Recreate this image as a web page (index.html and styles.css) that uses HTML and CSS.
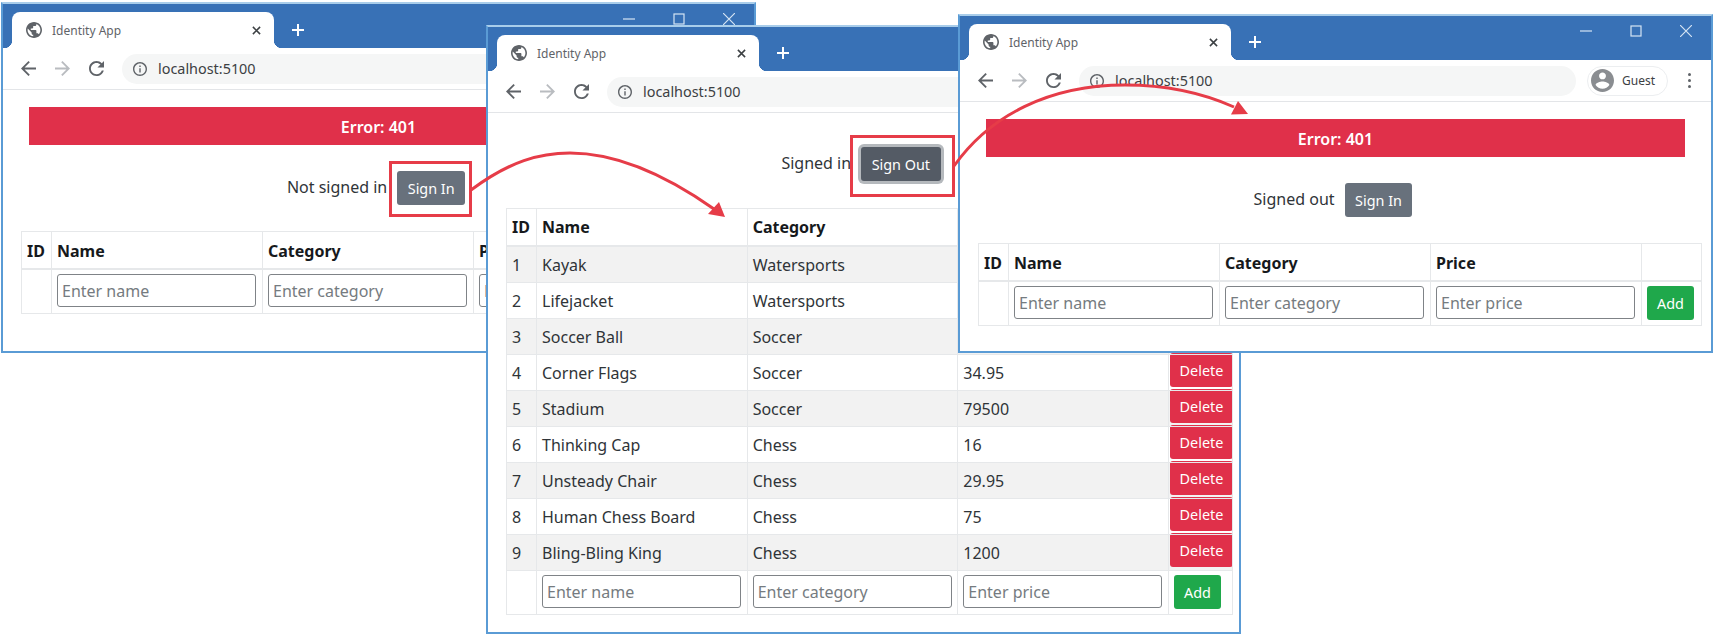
FILE: index.html
```html
<!DOCTYPE html>
<html lang="en">
<head>
    <meta charset="UTF-8">
    <title>Identity App</title>
    <link rel="stylesheet" href="styles.css">
</head>
<body>
    <svg class="defs" aria-hidden="true">
        <symbol id="i-globe" viewBox="2 2 20 20"><path d="M12 2C6.48 2 2 6.48 2 12s4.48 10 10 10 10-4.48 10-10S17.52 2 12 2zm-1 17.93c-3.95-.49-7-3.85-7-7.93 0-.62.08-1.21.21-1.79L9 15v1c0 1.1.9 2 2 2v1.93zm6.9-2.54c-.26-.81-1-1.39-1.9-1.39h-1v-3c0-.55-.45-1-1-1H8v-2h2c.55 0 1-.45 1-1V7h2c1.1 0 2-.9 2-2v-.41c2.93 1.19 5 4.06 5 7.41 0 2.08-.8 3.97-2.1 5.39z"/></symbol>
        <symbol id="i-back" viewBox="4 4 16 16"><path d="M20 11H7.83l5.59-5.59L12 4l-8 8 8 8 1.41-1.41L7.83 13H20v-2z"/></symbol>
        <symbol id="i-forward" viewBox="4 4 16 16"><path d="M12 4l-1.41 1.41L16.17 11H4v2h12.17l-5.58 5.59L12 20l8-8z"/></symbol>
        <symbol id="i-reload" viewBox="4 4 16 16"><path d="M17.65 6.35C16.2 4.9 14.21 4 12 4c-4.42 0-7.99 3.58-7.99 8s3.57 8 7.99 8c3.73 0 6.84-2.55 7.73-6h-2.08c-.82 2.33-3.04 4-5.65 4-3.31 0-6-2.69-6-6s2.69-6 6-6c1.66 0 3.14.69 4.22 1.78L13 11h7V4l-2.35 2.35z"/></symbol>
        <symbol id="i-info" viewBox="2 2 20 20"><path d="M11 7h2v2h-2zm0 4h2v6h-2zm1-9C6.48 2 2 6.48 2 12s4.48 10 10 10 10-4.48 10-10S17.52 2 12 2zm0 18c-4.41 0-8-3.59-8-8s3.59-8 8-8 8 3.59 8 8-3.59 8-8 8z"/></symbol>
        <symbol id="i-user" viewBox="2 2 20 20"><path d="M12 2C6.48 2 2 6.48 2 12s4.48 10 10 10 10-4.48 10-10S17.52 2 12 2zm0 3c1.66 0 3 1.34 3 3s-1.34 3-3 3-3-1.34-3-3 1.34-3 3-3zm0 14.2c-2.5 0-4.71-1.28-6-3.22.03-1.99 4-3.08 6-3.08 1.99 0 5.97 1.09 6 3.08-1.29 1.94-3.5 3.22-6 3.22z"/></symbol>
        <symbol id="i-close" viewBox="0 0 10 10"><path d="M1 1l8 8M9 1l-8 8" fill="none" stroke="currentColor" stroke-width="1.7"/></symbol>
        <symbol id="i-plus" viewBox="0 0 12 12"><path d="M6 0v12M0 6h12" fill="none" stroke="currentColor" stroke-width="2"/></symbol>
        <symbol id="i-min" viewBox="0 0 12 12"><path d="M0 6h12" fill="none" stroke="currentColor" stroke-width="1.2"/></symbol>
        <symbol id="i-max" viewBox="0 0 12 12"><rect x="1" y="1" width="10" height="10" fill="none" stroke="currentColor" stroke-width="1.2"/></symbol>
        <symbol id="i-x" viewBox="0 0 12 12"><path d="M0 0l12 12M12 0L0 12" fill="none" stroke="currentColor" stroke-width="1.2"/></symbol>
    </svg>

    <!-- janela 1: nao autenticado -->
    <section class="window win-first">
        <header class="tabstrip">
            <div class="tab">
                <svg class="favicon"><use href="#i-globe"/></svg>
                <span class="tab-title">Identity App</span>
                <svg class="tab-close"><use href="#i-close"/></svg>
            </div>
            <svg class="new-tab"><use href="#i-plus"/></svg>
            <div class="controls">
                <svg class="ctl"><use href="#i-min"/></svg>
                <svg class="ctl"><use href="#i-max"/></svg>
                <svg class="ctl"><use href="#i-x"/></svg>
            </div>
        </header>
        <nav class="toolbar">
            <svg class="nav-icon"><use href="#i-back"/></svg>
            <svg class="nav-icon off"><use href="#i-forward"/></svg>
            <svg class="nav-icon"><use href="#i-reload"/></svg>
            <div class="omnibox">
                <svg class="info"><use href="#i-info"/></svg>
                <span>localhost:5100</span>
            </div>
            <div class="profile">
                <svg class="avatar"><use href="#i-user"/></svg>
                <span>Guest</span>
            </div>
            <div class="kebab"><i></i><i></i><i></i></div>
        </nav>
        <main class="page">
            <div class="alert">Error: 401</div>
            <div class="auth">
                <span>Not signed in</span>
                <button class="btn btn-gray">Sign In</button>
            </div>
            <table class="grid grid-short">
                <colgroup><col class="c-id"><col class="c-wide"><col class="c-wide"><col class="c-wide"><col class="c-act"></colgroup>
                <thead>
                    <tr><th>ID</th><th>Name</th><th>Category</th><th>Price</th><th></th></tr>
                </thead>
                <tbody>
                    <tr class="form-row">
                        <td></td>
                        <td><input placeholder="Enter name"></td>
                        <td><input placeholder="Enter category"></td>
                        <td><input placeholder="Enter price"></td>
                        <td><button class="btn btn-green">Add</button></td>
                    </tr>
                </tbody>
            </table>
        </main>
    </section>

    <!-- janela 2: autenticado, com os produtos -->
    <section class="window win-second">
        <header class="tabstrip">
            <div class="tab">
                <svg class="favicon"><use href="#i-globe"/></svg>
                <span class="tab-title">Identity App</span>
                <svg class="tab-close"><use href="#i-close"/></svg>
            </div>
            <svg class="new-tab"><use href="#i-plus"/></svg>
            <div class="controls">
                <svg class="ctl"><use href="#i-min"/></svg>
                <svg class="ctl"><use href="#i-max"/></svg>
                <svg class="ctl"><use href="#i-x"/></svg>
            </div>
        </header>
        <nav class="toolbar">
            <svg class="nav-icon"><use href="#i-back"/></svg>
            <svg class="nav-icon off"><use href="#i-forward"/></svg>
            <svg class="nav-icon"><use href="#i-reload"/></svg>
            <div class="omnibox">
                <svg class="info"><use href="#i-info"/></svg>
                <span>localhost:5100</span>
            </div>
            <div class="profile">
                <svg class="avatar"><use href="#i-user"/></svg>
                <span>Guest</span>
            </div>
            <div class="kebab"><i></i><i></i><i></i></div>
        </nav>
        <main class="page">
            <div class="auth">
                <span>Signed in</span>
                <button class="btn btn-dark">Sign Out</button>
            </div>
            <table class="grid grid-long">
                <colgroup><col class="c-id"><col class="c-wide"><col class="c-wide"><col class="c-wide"><col class="c-act"></colgroup>
                <thead>
                    <tr><th>ID</th><th>Name</th><th>Category</th><th>Price</th><th></th></tr>
                </thead>
                <tbody>
                    <tr><td>1</td><td>Kayak</td><td>Watersports</td><td>275</td><td class="act"><button class="btn btn-red">Delete</button></td></tr>
                    <tr><td>2</td><td>Lifejacket</td><td>Watersports</td><td>48.95</td><td class="act"><button class="btn btn-red">Delete</button></td></tr>
                    <tr><td>3</td><td>Soccer Ball</td><td>Soccer</td><td>19.5</td><td class="act"><button class="btn btn-red">Delete</button></td></tr>
                    <tr><td>4</td><td>Corner Flags</td><td>Soccer</td><td>34.95</td><td class="act"><button class="btn btn-red">Delete</button></td></tr>
                    <tr><td>5</td><td>Stadium</td><td>Soccer</td><td>79500</td><td class="act"><button class="btn btn-red">Delete</button></td></tr>
                    <tr><td>6</td><td>Thinking Cap</td><td>Chess</td><td>16</td><td class="act"><button class="btn btn-red">Delete</button></td></tr>
                    <tr><td>7</td><td>Unsteady Chair</td><td>Chess</td><td>29.95</td><td class="act"><button class="btn btn-red">Delete</button></td></tr>
                    <tr><td>8</td><td>Human Chess Board</td><td>Chess</td><td>75</td><td class="act"><button class="btn btn-red">Delete</button></td></tr>
                    <tr><td>9</td><td>Bling-Bling King</td><td>Chess</td><td>1200</td><td class="act"><button class="btn btn-red">Delete</button></td></tr>
                    <tr class="form-row">
                        <td></td>
                        <td><input placeholder="Enter name"></td>
                        <td><input placeholder="Enter category"></td>
                        <td><input placeholder="Enter price"></td>
                        <td><button class="btn btn-green">Add</button></td>
                    </tr>
                </tbody>
            </table>
        </main>
    </section>

    <!-- janela 3: depois de sair -->
    <section class="window win-third">
        <header class="tabstrip">
            <div class="tab">
                <svg class="favicon"><use href="#i-globe"/></svg>
                <span class="tab-title">Identity App</span>
                <svg class="tab-close"><use href="#i-close"/></svg>
            </div>
            <svg class="new-tab"><use href="#i-plus"/></svg>
            <div class="controls">
                <svg class="ctl"><use href="#i-min"/></svg>
                <svg class="ctl"><use href="#i-max"/></svg>
                <svg class="ctl"><use href="#i-x"/></svg>
            </div>
        </header>
        <nav class="toolbar">
            <svg class="nav-icon"><use href="#i-back"/></svg>
            <svg class="nav-icon off"><use href="#i-forward"/></svg>
            <svg class="nav-icon"><use href="#i-reload"/></svg>
            <div class="omnibox">
                <svg class="info"><use href="#i-info"/></svg>
                <span>localhost:5100</span>
            </div>
            <div class="profile">
                <svg class="avatar"><use href="#i-user"/></svg>
                <span>Guest</span>
            </div>
            <div class="kebab"><i></i><i></i><i></i></div>
        </nav>
        <main class="page">
            <div class="alert">Error: 401</div>
            <div class="auth">
                <span>Signed out</span>
                <button class="btn btn-gray">Sign In</button>
            </div>
            <table class="grid grid-short">
                <colgroup><col class="c-id"><col class="c-wide"><col class="c-wide"><col class="c-wide"><col class="c-act"></colgroup>
                <thead>
                    <tr><th>ID</th><th>Name</th><th>Category</th><th>Price</th><th></th></tr>
                </thead>
                <tbody>
                    <tr class="form-row">
                        <td></td>
                        <td><input placeholder="Enter name"></td>
                        <td><input placeholder="Enter category"></td>
                        <td><input placeholder="Enter price"></td>
                        <td><button class="btn btn-green">Add</button></td>
                    </tr>
                </tbody>
            </table>
        </main>
    </section>

    <!-- anotacoes em vermelho por cima das janelas -->
    <svg class="notes" viewBox="0 0 1714 635">
        <rect class="note-line" x="390.5" y="162.5" width="80" height="53"/>
        <rect class="note-line" x="851.5" y="136.5" width="102" height="59"/>
        <path class="note-line" d="M471 190C510 161 540 153 570 153C620 153 670 178 714 209"/>
        <path class="note-head" d="M725 217L708 214L719 202Z"/>
        <path class="note-line" d="M954 166C990 115 1050 85 1125 85C1170 85 1205 94 1234 107"/>
        <path class="note-head" d="M1248 114L1231 114.5L1238 101Z"/>
    </svg>
</body>
</html>
```

FILE: styles.css
```css
body {
    margin: 0;
    width: 1714px;
    height: 635px;
    overflow: hidden;
    position: relative;
    background-color: white;
    font-family: "Noto Sans", "Open Sans", sans-serif;
    font-size: 16px;
    color: #2f3438;
}

.defs {
    display: none;
}

/* janelas do navegador */
.window {
    position: absolute;
    box-sizing: border-box;
    width: 755px;
    display: flex;
    flex-direction: column;
    overflow: hidden;
    background-color: white;
    border: 2px solid #5a9bd5;
    border-top-color: #a9cdea;
}

.win-first {
    left: 1px;
    top: 2px;
    height: 351px;
}

.win-second {
    left: 486px;
    top: 25px;
    height: 609px;
}

.win-third {
    left: 958px;
    top: 14px;
    height: 339px;
}

/* barra de abas */
.tabstrip {
    flex: none;
    height: 44px;
    display: flex;
    align-items: flex-end;
    padding-left: 9px;
    background-color: #3871b6;
}

.tab {
    position: relative;
    box-sizing: border-box;
    width: 262px;
    height: 36px;
    display: flex;
    align-items: center;
    padding: 0 13px 0 14px;
    background-color: white;
    border-radius: 8px 8px 0 0;
}

.tab::before,
.tab::after {
    content: "";
    position: absolute;
    bottom: 0;
    width: 8px;
    height: 8px;
}

.tab::before {
    left: -8px;
    background: radial-gradient(circle at 0 0, #3871b6 8px, white 8.5px);
}

.tab::after {
    right: -8px;
    background: radial-gradient(circle at 100% 0, #3871b6 8px, white 8.5px);
}

.favicon {
    width: 16px;
    height: 16px;
    fill: #5f6368;
}

.tab-title {
    flex: 1;
    margin-left: 10px;
    font-size: 12px;
    color: #5f6368;
}

.tab-close {
    width: 9px;
    height: 9px;
    color: #3c4043;
}

.new-tab {
    width: 12px;
    height: 12px;
    margin: 0 0 12px 18px;
    color: white;
}

.controls {
    display: flex;
    gap: 38px;
    margin: 0 0 23px 319px;
    color: #d5e4f3;
}

.ctl {
    width: 12px;
    height: 12px;
}

/* barra de endereco */
.toolbar {
    flex: none;
    height: 41px;
    display: flex;
    align-items: center;
    padding-left: 18px;
    border-bottom: 1px solid #e3e5e8;
}

.nav-icon {
    width: 15px;
    height: 15px;
    margin-right: 19px;
    fill: #5f6368;
}

.nav-icon.off {
    fill: #b9bcc0;
}

.omnibox {
    width: 486px;
    height: 30px;
    margin-left: -1px;
    display: flex;
    align-items: center;
    padding-left: 11px;
    border-radius: 15px;
    background-color: #f5f6f6;
    font-size: 14.4px;
    color: #3c4043;
}

.omnibox span {
    margin-left: 11px;
}

.info {
    width: 14px;
    height: 14px;
    fill: #5f6368;
}

.profile {
    width: 81px;
    height: 30px;
    box-sizing: border-box;
    margin-left: 11px;
    display: flex;
    align-items: center;
    padding-left: 3px;
    border: 1px solid #eceef0;
    border-radius: 15px;
    font-size: 12px;
    color: #3c4043;
}

.profile span {
    margin-left: 8px;
}

.avatar {
    width: 23px;
    height: 23px;
    fill: #8a8d91;
}

.kebab {
    margin-left: 20px;
    display: flex;
    flex-direction: column;
    gap: 3px;
}

.kebab i {
    width: 3px;
    height: 3px;
    border-radius: 50%;
    background-color: #5f6368;
}

/* conteudo da pagina */
.page {
    display: flex;
    flex-direction: column;
    padding-top: 17px;
}

.alert {
    height: 38px;
    line-height: 40px;
    margin: 0 26px 9px;
    text-align: center;
    font-weight: 600;
    color: white;
    background-color: #e0304a;
}

.auth {
    height: 34px;
    margin-top: 17px;
    padding-right: 5px;
    display: flex;
    justify-content: center;
    align-items: center;
    gap: 10px;
}

.auth span {
    margin-top: -2px;
}

.btn {
    height: 34px;
    padding: 0 10.5px;
    border: 0;
    border-radius: 3px;
    font-family: inherit;
    font-size: 14.4px;
    color: white;
}

.btn-gray {
    background-color: #68717c;
}

.btn-dark {
    background-color: #545b65;
    box-shadow: 0 0 0 3px #b5b9bd;
}

.btn-red {
    background-color: #e0304a;
}

.btn-green {
    background-color: #1fa84b;
}

/* tabela */
.grid {
    margin-left: 18px;
    border-collapse: collapse;
    table-layout: fixed;
}

.grid-short {
    width: 723px;
    margin-top: 26px;
}

.grid-long {
    width: 726px;
    margin-top: 27px;
}

.c-id {
    width: 30px;
}

.c-wide {
    width: 211px;
}

.c-act {
    width: 60px;
}

.grid-long .c-wide {
    width: 210.67px;
}

.grid-long .c-act {
    width: 64px;
}

.grid th,
.grid td {
    padding: 0 5px;
    border: 1px solid #e6e8ea;
    text-align: left;
    white-space: nowrap;
}

.grid th {
    height: 36px;
    font-weight: 700;
    color: #16191c;
    border-bottom-width: 2px;
}

.grid-short th {
    padding-top: 2px;
    height: 34px;
}

.grid td {
    height: 35px;
}

.grid tbody tr:nth-child(odd):not(.form-row) {
    background-color: #f2f2f2;
}

.grid td.act {
    padding: 0 0 0 1px;
    vertical-align: top;
    text-align: center;
}

.act .btn {
    display: block;
    width: 63px;
    margin: -2px 0 0;
    padding: 0;
}

.grid .form-row td {
    height: 38px;
    padding-top: 4px;
    padding-bottom: 1px;
    vertical-align: top;
}

.form-row .btn {
    width: 47px;
    padding: 0;
}

input {
    box-sizing: border-box;
    display: block;
    width: 199px;
    height: 33px;
    padding: 0 4px;
    border: 1px solid #7f8387;
    border-radius: 3px;
    font-family: inherit;
    font-size: 16px;
}

input::placeholder {
    color: #757b80;
}

/* retangulos e setas */
.notes {
    position: absolute;
    left: 0;
    top: 0;
    width: 1714px;
    height: 635px;
    pointer-events: none;
}

.note-line {
    fill: none;
    stroke: #e63c48;
    stroke-width: 3;
}

.note-head {
    fill: #e63c48;
}
```
